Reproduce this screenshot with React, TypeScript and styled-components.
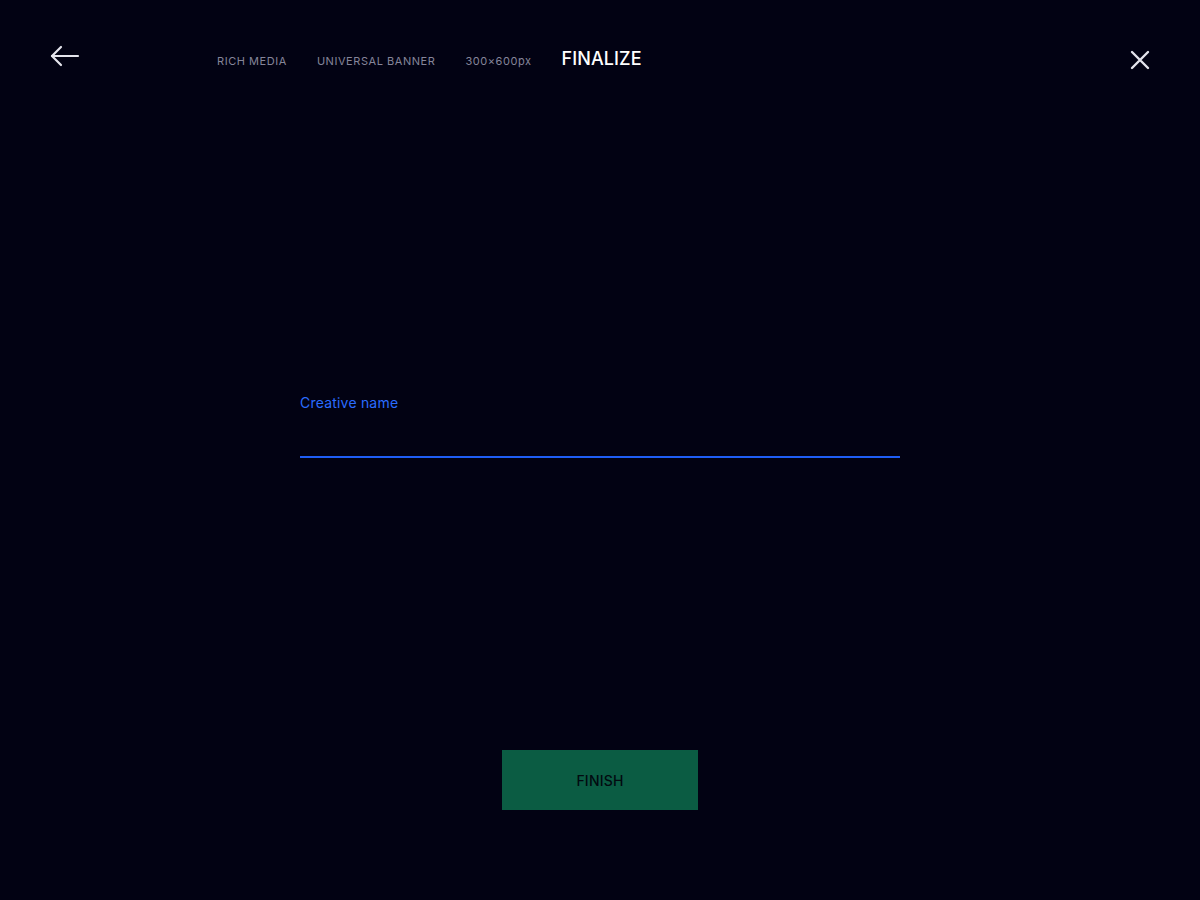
import React from "react";
import styled, { createGlobalStyle } from "styled-components";

const Global = createGlobalStyle`
  html, body { margin: 0; padding: 0; background: #020213; }
  body { font-family: Inter, "Noto Sans", sans-serif; }
`;

const Page = styled.div`
  width: 1200px;
  height: 900px;
  display: flex;
  flex-direction: column;
  background: #020213;
`;

const Header = styled.header`
  display: flex;
  align-items: center;
  height: 60px;
  padding: 30px 50px 0 50px;
  box-sizing: content-box;
`;

const IconButton = styled.button<{ $lift?: number }>`
  background: none;
  border: 0;
  padding: 0;
  display: flex;
  align-items: center;
  justify-content: center;
  cursor: pointer;
  color: #e4e4ec;
  margin-bottom: ${(p) => (p.$lift ?? 0) * 2}px;
`;

const Crumbs = styled.nav`
  display: flex;
  align-items: baseline;
  gap: 30px;
  margin-left: 137px;
  flex: 1;
  padding-bottom: 3px;
`;

const Crumb = styled.span<{ $active?: boolean }>`
  font-size: ${(p) => (p.$active ? "18px" : "11px")};
  letter-spacing: ${(p) => (p.$active ? "0.1px" : "0.55px")};
  color: ${(p) => (p.$active ? "#ffffff" : "#85859a")};
  font-weight: ${(p) => (p.$active ? 500 : 400)};
`;

const Main = styled.main`
  flex: 1;
  display: flex;
  flex-direction: column;
  align-items: center;
`;

const Field = styled.label`
  margin-top: 304px;
  width: 600px;
  display: flex;
  flex-direction: column;
`;

const Label = styled.span`
  color: #2a6cff;
  font-size: 14px;
  letter-spacing: 0.2px;
  line-height: 18px;
`;

const Input = styled.input`
  margin-top: 10px;
  height: 34px;
  background: transparent;
  border: 0;
  border-bottom: 2px solid #1f5ef5;
  outline: none;
  color: #fff;
  font-size: 16px;
  font-family: inherit;
  padding: 0;
`;

const Finish = styled.button`
  margin-top: 292px;
  width: 196px;
  height: 60px;
  background: #0b5c43;
  border: 0;
  color: #020a10;
  font-family: inherit;
  font-size: 14px;
  font-weight: 500;
  letter-spacing: 0.2px;
  cursor: pointer;
`;

export default function App() {
  return (
    <>
      <Global />
      <Page>
        <Header>
          <IconButton aria-label="Back" $lift={4}>
            <svg width="30" height="22" viewBox="0 0 30 22" fill="none" stroke="#e4e4ec" strokeWidth="2.2" strokeLinecap="round" strokeLinejoin="round">
              <path d="M28 11H2" />
              <path d="M11 2L2 11l9 9" />
            </svg>
          </IconButton>
          <Crumbs>
            <Crumb>RICH MEDIA</Crumb>
            <Crumb>UNIVERSAL BANNER</Crumb>
            <Crumb>300×600px</Crumb>
            <Crumb $active>FINALIZE</Crumb>
          </Crumbs>
          <IconButton aria-label="Close">
            <svg width="20" height="20" viewBox="0 0 20 20" fill="none" stroke="#e4e4ec" strokeWidth="2.4" strokeLinecap="round">
              <path d="M2 2l16 16M18 2L2 18" />
            </svg>
          </IconButton>
        </Header>
        <Main>
          <Field>
            <Label>Creative name</Label>
            <Input type="text" />
          </Field>
          <Finish>FINISH</Finish>
        </Main>
      </Page>
    </>
  );
}
